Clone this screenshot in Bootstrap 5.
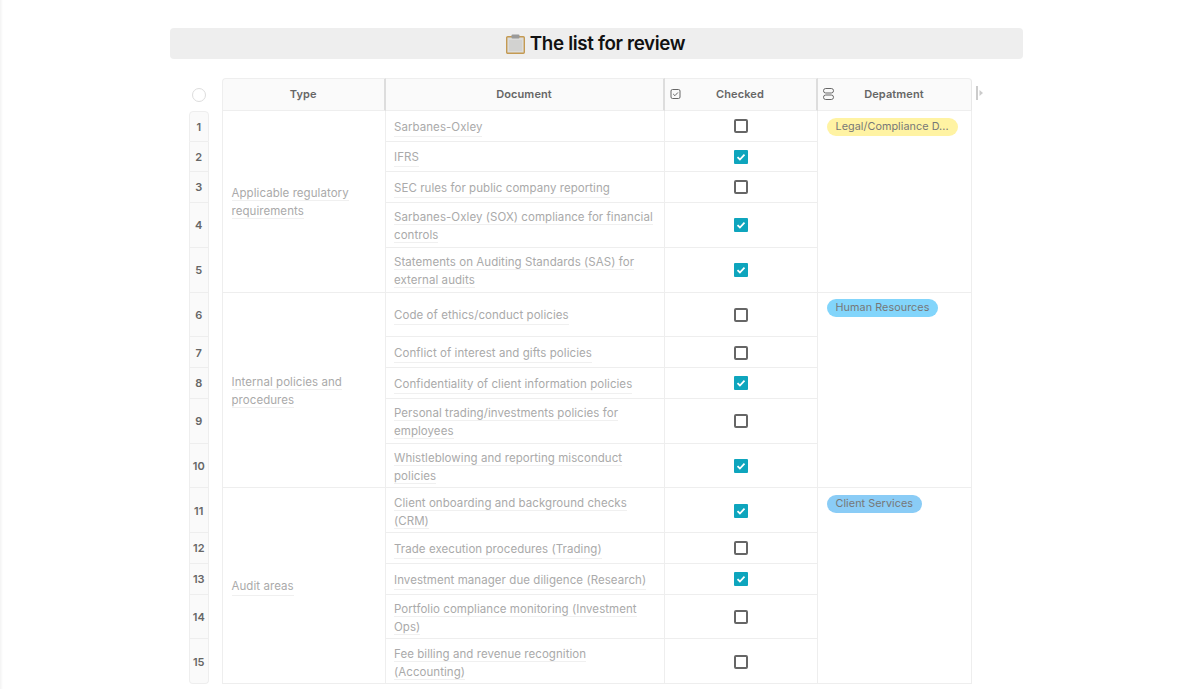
<!DOCTYPE html>
<html lang="en">
<head>
<meta charset="utf-8">
<title>The list for review</title>
<link rel="stylesheet" href="https://cdn.jsdelivr.net/npm/bootstrap@5.3.0/dist/css/bootstrap.min.css">
<style>
html,body{height:100%;overflow:hidden}
body{background:#fff;font-family:Inter,"Liberation Sans",sans-serif;color:#333}
.page-edge{position:fixed;left:0;top:0;height:689px;width:3px;background:linear-gradient(90deg,#f3f3f3,#fff)}
.sheet{width:853px;margin-left:170px;padding-top:28px}
.title-bar{height:31px;background:#eee;border-radius:4px;gap:5px;font-size:18.8px;font-weight:600;letter-spacing:-.35px;color:#111;line-height:31px;padding-right:2px}
.body-wrap{margin-top:19px;margin-left:18.5px;position:relative}
.rows-grid{display:grid;width:783px;grid-template-columns:20.5px 13px 163.5px 279px 153px 154px;
grid-template-rows:33px 30.7px 30.7px 30.7px 44.8px 44.8px 44.8px 30.7px 30.7px 44.8px 44.8px 44.8px 30.7px 30.7px 44.8px 44.8px}
.select-all{grid-column:1;grid-row:1;align-self:center;justify-self:center;width:14px;height:14px;border:1px solid #ddd;border-radius:50%}
.hcell{grid-row:1;background:#fafafa;border-top:1px solid #eee;border-bottom:1px solid #eee;border-right:2px solid #ddd;font-size:11px;font-weight:600;color:#666;position:relative;letter-spacing:.1px}
.hcell.first-h{border-left:1px solid #eee;border-top-left-radius:4px}
.hcell.last-h{border-right:1px solid #e8e8e8;border-top-right-radius:4px}
.hicon{position:absolute;left:5px;top:9px;width:12px;height:12px}
.idx{grid-column:1;background:#fafafa;border:1px solid #eee;border-top:0;font-size:11px;font-weight:600;color:#666;padding-top:1px}
.idx.idx-first{border-top:1px solid #eee;border-top-left-radius:4px;border-top-right-radius:4px}
.idx.idx-last{border-bottom-left-radius:4px;border-bottom-right-radius:4px}
.cell{border-right:1px solid #eee;border-bottom:1px solid #eee;font-size:11.5px;line-height:18px;color:#aaa;padding:1px 8.5px 0;letter-spacing:.06px}
.type-cell{grid-column:3;border-left:1px solid #eee;padding-top:1.5px}
.doc-cell{grid-column:4;padding-top:2.5px}
.chk-cell{grid-column:5;padding:.5px 0 0}
.dep-cell{grid-column:6;padding:6.5px 9px 0;border-right:1px solid #eee}
.ul{border-bottom:1px solid #f0f0f0}
.box{width:14px;height:14px;border:2px solid #666;border-radius:2px;background:#fff}
.box.on{background:#0ea5bd;border:0;border-radius:1px}
.tag{display:block;width:fit-content;height:18px;line-height:18px;border-radius:9px;padding:0 9px;font-size:10.8px;color:#777;letter-spacing:.06px;white-space:nowrap}
.tag-y{background:#fff3a3}
.tag-b{background:#82d5fb}
.tag-c{background:#8accf6}
.expander{position:absolute;left:787.5px;top:8px;width:8px;height:14px}
</style>
</head>
<body>
<div class="page-edge"></div>
<div class="sheet">
  <div class="title-bar d-flex justify-content-center align-items-center">
    <svg width="19" height="20" viewBox="0 0 19 20" aria-hidden="true"><rect x=".7" y="2.7" width="17.6" height="16.6" rx="1" fill="#dcdcda" stroke="#c49a52" stroke-width="1.4"/><rect x="3" y="6" width="13" height="11" fill="#d2d2d0"/><rect x="5.5" y=".5" width="8" height="4" rx="1" fill="#9a9a9a"/></svg>
    <span>The list for review</span>
  </div>
  <div class="body-wrap">
    <div class="rows-grid" id="g">
      <div class="select-all"></div>
      <div class="hcell first-h d-flex align-items-center justify-content-center" style="grid-column:3">Type</div>
      <div class="hcell d-flex align-items-center justify-content-center" style="grid-column:4">Document</div>
      <div class="hcell d-flex align-items-center justify-content-center" style="grid-column:5">
        <svg class="hicon" viewBox="0 0 12 12" aria-hidden="true"><rect x="1" y="1.5" width="9" height="9" rx="1.5" fill="none" stroke="#666"/><path d="M3.2 6l1.7 1.7 3-3.2" fill="none" stroke="#666"/></svg>
        <span>Checked</span></div>
      <div class="hcell last-h d-flex align-items-center justify-content-center" style="grid-column:6">
        <svg class="hicon" viewBox="0 0 12 12" aria-hidden="true"><rect x=".5" y=".5" width="10" height="4.5" rx="2.2" fill="none" stroke="#666"/><rect x=".5" y="7" width="10" height="4.5" rx="2.2" fill="none" stroke="#666"/></svg>
        <span>Depatment</span></div>

      <div class="idx idx-first d-flex align-items-center justify-content-center" style="grid-row:2">1</div>
      <div class="idx d-flex align-items-center justify-content-center" style="grid-row:3">2</div>
      <div class="idx d-flex align-items-center justify-content-center" style="grid-row:4">3</div>
      <div class="idx d-flex align-items-center justify-content-center" style="grid-row:5">4</div>
      <div class="idx d-flex align-items-center justify-content-center" style="grid-row:6">5</div>
      <div class="idx d-flex align-items-center justify-content-center" style="grid-row:7">6</div>
      <div class="idx d-flex align-items-center justify-content-center" style="grid-row:8">7</div>
      <div class="idx d-flex align-items-center justify-content-center" style="grid-row:9">8</div>
      <div class="idx d-flex align-items-center justify-content-center" style="grid-row:10">9</div>
      <div class="idx d-flex align-items-center justify-content-center" style="grid-row:11">10</div>
      <div class="idx d-flex align-items-center justify-content-center" style="grid-row:12">11</div>
      <div class="idx d-flex align-items-center justify-content-center" style="grid-row:13">12</div>
      <div class="idx d-flex align-items-center justify-content-center" style="grid-row:14">13</div>
      <div class="idx d-flex align-items-center justify-content-center" style="grid-row:15">14</div>
      <div class="idx idx-last d-flex align-items-center justify-content-center" style="grid-row:16">15</div>

      <div class="cell type-cell d-flex align-items-center" style="grid-row:2 / span 5"><span><span class="ul">Applicable regulatory</span><br><span class="ul">requirements</span></span></div>
      <div class="cell type-cell d-flex align-items-center" style="grid-row:7 / span 5"><span><span class="ul">Internal policies and</span><br><span class="ul">procedures</span></span></div>
      <div class="cell type-cell d-flex align-items-center" style="grid-row:12 / span 5"><span class="ul">Audit areas</span></div>

      <div class="cell dep-cell" style="grid-row:2 / span 5"><span class="tag tag-y">Legal/Compliance D...</span></div>
      <div class="cell dep-cell" style="grid-row:7 / span 5"><span class="tag tag-b">Human Resources</span></div>
      <div class="cell dep-cell" style="grid-row:12 / span 5"><span class="tag tag-c">Client Services</span></div>

      <div class="cell doc-cell d-flex align-items-center" style="grid-row:2"><span class="ul">Sarbanes-Oxley</span></div>
      <div class="cell chk-cell d-flex align-items-center justify-content-center" style="grid-row:2"><div class="box"></div></div>
      <div class="cell doc-cell d-flex align-items-center" style="grid-row:3"><span class="ul">IFRS</span></div>
      <div class="cell chk-cell d-flex align-items-center justify-content-center" style="grid-row:3"><svg class="box on" viewBox="0 0 14 14" aria-hidden="true"><path d="M3.5 7.2l2.4 2.3 4.6-4.8" fill="none" stroke="#fff" stroke-width="1.8"/></svg></div>
      <div class="cell doc-cell d-flex align-items-center" style="grid-row:4"><span class="ul">SEC rules for public company reporting</span></div>
      <div class="cell chk-cell d-flex align-items-center justify-content-center" style="grid-row:4"><div class="box"></div></div>
      <div class="cell doc-cell d-flex align-items-center" style="grid-row:5"><span><span class="ul">Sarbanes-Oxley (SOX) compliance for financial</span><br><span class="ul">controls</span></span></div>
      <div class="cell chk-cell d-flex align-items-center justify-content-center" style="grid-row:5"><svg class="box on" viewBox="0 0 14 14" aria-hidden="true"><path d="M3.5 7.2l2.4 2.3 4.6-4.8" fill="none" stroke="#fff" stroke-width="1.8"/></svg></div>
      <div class="cell doc-cell d-flex align-items-center" style="grid-row:6"><span><span class="ul">Statements on Auditing Standards (SAS) for</span><br><span class="ul">external audits</span></span></div>
      <div class="cell chk-cell d-flex align-items-center justify-content-center" style="grid-row:6"><svg class="box on" viewBox="0 0 14 14" aria-hidden="true"><path d="M3.5 7.2l2.4 2.3 4.6-4.8" fill="none" stroke="#fff" stroke-width="1.8"/></svg></div>

      <div class="cell doc-cell d-flex align-items-center" style="grid-row:7"><span class="ul">Code of ethics/conduct policies</span></div>
      <div class="cell chk-cell d-flex align-items-center justify-content-center" style="grid-row:7"><div class="box"></div></div>
      <div class="cell doc-cell d-flex align-items-center" style="grid-row:8"><span class="ul">Conflict of interest and gifts policies</span></div>
      <div class="cell chk-cell d-flex align-items-center justify-content-center" style="grid-row:8"><div class="box"></div></div>
      <div class="cell doc-cell d-flex align-items-center" style="grid-row:9"><span class="ul">Confidentiality of client information policies</span></div>
      <div class="cell chk-cell d-flex align-items-center justify-content-center" style="grid-row:9"><svg class="box on" viewBox="0 0 14 14" aria-hidden="true"><path d="M3.5 7.2l2.4 2.3 4.6-4.8" fill="none" stroke="#fff" stroke-width="1.8"/></svg></div>
      <div class="cell doc-cell d-flex align-items-center" style="grid-row:10"><span><span class="ul">Personal trading/investments policies for</span><br><span class="ul">employees</span></span></div>
      <div class="cell chk-cell d-flex align-items-center justify-content-center" style="grid-row:10"><div class="box"></div></div>
      <div class="cell doc-cell d-flex align-items-center" style="grid-row:11"><span><span class="ul">Whistleblowing and reporting misconduct</span><br><span class="ul">policies</span></span></div>
      <div class="cell chk-cell d-flex align-items-center justify-content-center" style="grid-row:11"><svg class="box on" viewBox="0 0 14 14" aria-hidden="true"><path d="M3.5 7.2l2.4 2.3 4.6-4.8" fill="none" stroke="#fff" stroke-width="1.8"/></svg></div>

      <div class="cell doc-cell d-flex align-items-center" style="grid-row:12"><span><span class="ul">Client onboarding and background checks</span><br><span class="ul">(CRM)</span></span></div>
      <div class="cell chk-cell d-flex align-items-center justify-content-center" style="grid-row:12"><svg class="box on" viewBox="0 0 14 14" aria-hidden="true"><path d="M3.5 7.2l2.4 2.3 4.6-4.8" fill="none" stroke="#fff" stroke-width="1.8"/></svg></div>
      <div class="cell doc-cell d-flex align-items-center" style="grid-row:13"><span class="ul">Trade execution procedures (Trading)</span></div>
      <div class="cell chk-cell d-flex align-items-center justify-content-center" style="grid-row:13"><div class="box"></div></div>
      <div class="cell doc-cell d-flex align-items-center" style="grid-row:14"><span class="ul">Investment manager due diligence (Research)</span></div>
      <div class="cell chk-cell d-flex align-items-center justify-content-center" style="grid-row:14"><svg class="box on" viewBox="0 0 14 14" aria-hidden="true"><path d="M3.5 7.2l2.4 2.3 4.6-4.8" fill="none" stroke="#fff" stroke-width="1.8"/></svg></div>
      <div class="cell doc-cell d-flex align-items-center" style="grid-row:15"><span><span class="ul">Portfolio compliance monitoring (Investment</span><br><span class="ul">Ops)</span></span></div>
      <div class="cell chk-cell d-flex align-items-center justify-content-center" style="grid-row:15"><div class="box"></div></div>
      <div class="cell doc-cell d-flex align-items-center" style="grid-row:16"><span><span class="ul">Fee billing and revenue recognition</span><br><span class="ul">(Accounting)</span></span></div>
      <div class="cell chk-cell d-flex align-items-center justify-content-center" style="grid-row:16"><div class="box"></div></div>
    </div>
    <svg class="expander" viewBox="0 0 8 14" aria-hidden="true"><rect x="0" y="0" width="2" height="14" fill="#ccc"/><path d="M3.5 4l3.5 3-3.5 3z" fill="#ccc"/></svg>
  </div>
</div>
<script src="https://cdn.jsdelivr.net/npm/bootstrap@5.3.0/dist/js/bootstrap.bundle.min.js"></script>
</body>
</html>
